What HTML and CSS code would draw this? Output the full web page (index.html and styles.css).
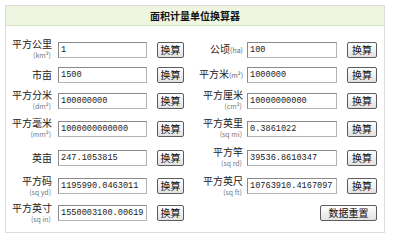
FILE: index.html
```html
<!DOCTYPE html>
<html lang="zh-CN">
<head>
    <meta charset="UTF-8">
    <meta name="viewport" content="width=device-width, initial-scale=1.0">
    <title>面积计量单位换算器</title>
    <link rel="stylesheet" href="styles.css">
</head>
<body>
    <div class="panel">
        <div class="panel-title">面积计量单位换算器</div>
        <div class="calc">
            <!-- row 1 -->
            <label class="unit">平方公里<small>(km²)</small></label>
            <input class="val" type="text" value="1">
            <button class="btn">换算</button>
            <label class="unit">公顷<span class="inline">(ha)</span></label>
            <input class="val" type="text" value="100">
            <button class="btn">换算</button>

            <!-- row 2 -->
            <label class="unit">市亩</label>
            <input class="val" type="text" value="1500">
            <button class="btn">换算</button>
            <label class="unit">平方米<span class="inline">(m²)</span></label>
            <input class="val" type="text" value="1000000">
            <button class="btn">换算</button>

            <!-- row 3 -->
            <label class="unit">平方分米<small>(dm²)</small></label>
            <input class="val" type="text" value="100000000">
            <button class="btn">换算</button>
            <label class="unit">平方厘米<small>(cm²)</small></label>
            <input class="val" type="text" value="10000000000">
            <button class="btn">换算</button>

            <!-- row 4 -->
            <label class="unit">平方毫米<small>(mm²)</small></label>
            <input class="val" type="text" value="1000000000000">
            <button class="btn">换算</button>
            <label class="unit">平方英里<small>(sq mi)</small></label>
            <input class="val" type="text" value="0.3861022">
            <button class="btn">换算</button>

            <!-- row 5 -->
            <label class="unit">英亩</label>
            <input class="val" type="text" value="247.1053815">
            <button class="btn">换算</button>
            <label class="unit">平方竿<small>(sq rd)</small></label>
            <input class="val" type="text" value="39536.8610347">
            <button class="btn">换算</button>

            <!-- row 6 -->
            <label class="unit">平方码<small>(sq yd)</small></label>
            <input class="val" type="text" value="1195990.0463011">
            <button class="btn">换算</button>
            <label class="unit">平方英尺<small>(sq ft)</small></label>
            <input class="val" type="text" value="10763910.4167097">
            <button class="btn">换算</button>

            <!-- row 7 -->
            <label class="unit">平方英寸<small>(sq in)</small></label>
            <input class="val" type="text" value="1550003100.00619">
            <button class="btn">换算</button>
            <span></span>
            <button class="btn btn-reset">数据重置</button>
        </div>
    </div>
</body>
</html>
```

FILE: styles.css
```css
/* Page */
body {
    margin: 0;
    padding: 5px;
    background: #fff;
    font-family: "Noto Sans CJK SC", "Liberation Sans", sans-serif;
    color: #222;
}

/* Outer frame */
.panel {
    width: 378px;
    border: 1px solid #dcdcdc;
    box-sizing: content-box;
}

.panel-title {
    height: 19px;
    line-height: 19px;
    background: #eef6e1;
    border-bottom: 1px solid #d3e3bd;
    text-align: center;
    font-size: 10px;
    font-weight: 700;
    color: #111;
}

/* Converter grid: label | input | button, twice */
.calc {
    display: grid;
    grid-template-columns: 52px 99px 27px 63px 100px 30px;
    grid-template-rows: 25px 25px 27px 29px 29px 28px 26px;
    align-items: center;
    padding: 11px 7px 6px 0;
}

.unit {
    display: flex;
    flex-direction: column;
    align-items: flex-end;
    padding-right: 6px;
    font-size: 10px;
    line-height: 12px;
    white-space: nowrap;
}

.unit:nth-child(6n+4) {
    padding-right: 4px;
    flex-direction: row;
    justify-content: flex-end;
    align-items: baseline;
}

.unit:nth-child(6n+4):has(small) {
    flex-direction: column;
    align-items: flex-end;
}

.unit small {
    font-size: 7px;
    line-height: 11px;
    color: #777;
    padding-right: 1px;
}

.unit .inline {
    font-size: 7px;
    color: #666;
}

.val {
    width: 89px;
    height: 16px;
    box-sizing: border-box;
    padding: 0 2px;
    border: 1px solid #b4b4b4;
    border-top-color: #8a8a8a;
    border-left-color: #8a8a8a;
    font-family: "Liberation Mono", monospace;
    font-size: 8.6px;
    color: #222;
    background: #fff;
}

.val:nth-child(6n+5) {
    width: 90px;
}

.btn {
    height: 16px;
    padding: 0;
    border: 1px solid #5c5c5c;
    border-radius: 2px;
    background: linear-gradient(#ffffff, #e2e2e2);
    font-family: "Noto Sans CJK SC", sans-serif;
    font-size: 10px;
    line-height: 14px;
    color: #111;
}

.btn-reset {
    grid-column: 5 / 7;
    justify-self: end;
    width: 57px;
}
```
